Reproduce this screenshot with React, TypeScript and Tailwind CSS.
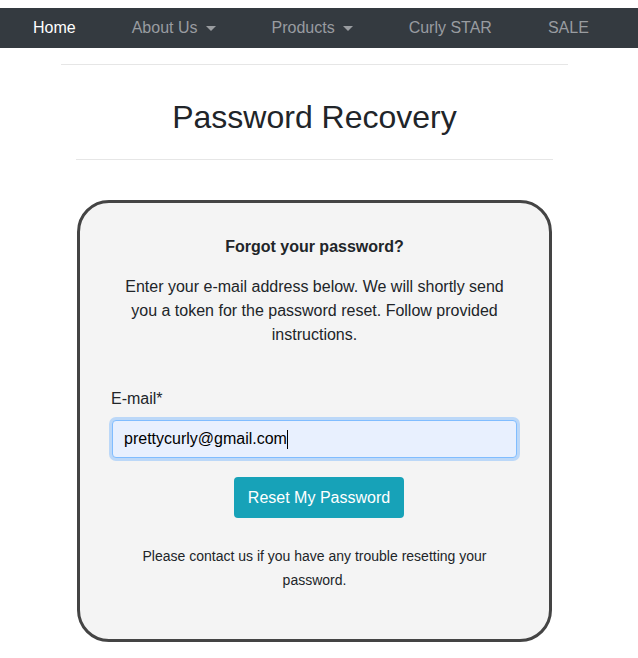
import React from 'react';

const NAV_ITEMS: { label: string; active?: boolean; dropdown?: boolean }[] = [
  { label: 'Home', active: true },
  { label: 'About Us', dropdown: true },
  { label: 'Products', dropdown: true },
  { label: 'Curly STAR' },
  { label: 'SALE' },
];

export default function App() {
  return (
    <div className="min-h-screen bg-white pt-2 text-[#212529]" style={{ fontFamily: '"Liberation Sans", Arial, sans-serif' }}>
      {/* Navbar */}
      <nav className="h-10 bg-[#343a40] flex items-center pl-[33px] gap-[56px]">
        {NAV_ITEMS.map((item) => (
          <a
            key={item.label}
            className={`flex items-center text-base leading-6 ${item.active ? 'text-white' : 'text-[#999ca0]'}`}
          >
            {item.label}
            {item.dropdown && (
              <span className="ml-2 w-0 h-0 border-t-[5px] border-t-current border-x-[5px] border-x-transparent" />
            )}
          </a>
        ))}
      </nav>

      <div className="w-[629px] pt-4">
        <div className="w-[507px] mx-auto h-px bg-[#e6e6e6]" />

        <h1 className="text-center text-[32px] leading-[38px] mt-[33px] mb-[23px]">Password Recovery</h1>

        <div className="w-[477px] mx-auto h-px bg-[#e6e6e6]" />

        {/* Card */}
        <div className="w-[475px] mx-auto mt-[40px] border-[3px] border-[#444] rounded-[32px] bg-[#f4f4f4] px-[30px] pt-[32px] pb-[47px]">
          <h2 className="text-center font-bold text-base leading-6">Forgot your password?</h2>
          <p className="w-[392px] mx-auto text-center text-base leading-6 mt-4">
            Enter your e-mail address below. We will shortly send you a token for the password reset. Follow provided instructions.
          </p>

          <div className="mt-10 px-[2px]">
            <label className="block text-base leading-6 -ml-px">E-mail*</label>
            <div className="mt-[9px] h-[38px] rounded border border-[#80bdff] bg-[#e8f0fe] ring-[3px] ring-[#bcd8f8] flex items-center pl-[11px] text-base text-black">
              prettycurly@gmail.com
              <span className="w-px h-[19px] bg-black" />
            </div>
          </div>

          <div className="flex justify-center pl-[9px] mt-[19px]">
            <button className="h-[41px] px-[14px] rounded bg-[#17a2b8] text-white text-base">Reset My Password</button>
          </div>

          <p className="w-[360px] mx-auto text-center text-sm leading-6 mt-[26px]">
            Please contact us if you have any trouble resetting your password.
          </p>
        </div>
      </div>
    </div>
  );
}
